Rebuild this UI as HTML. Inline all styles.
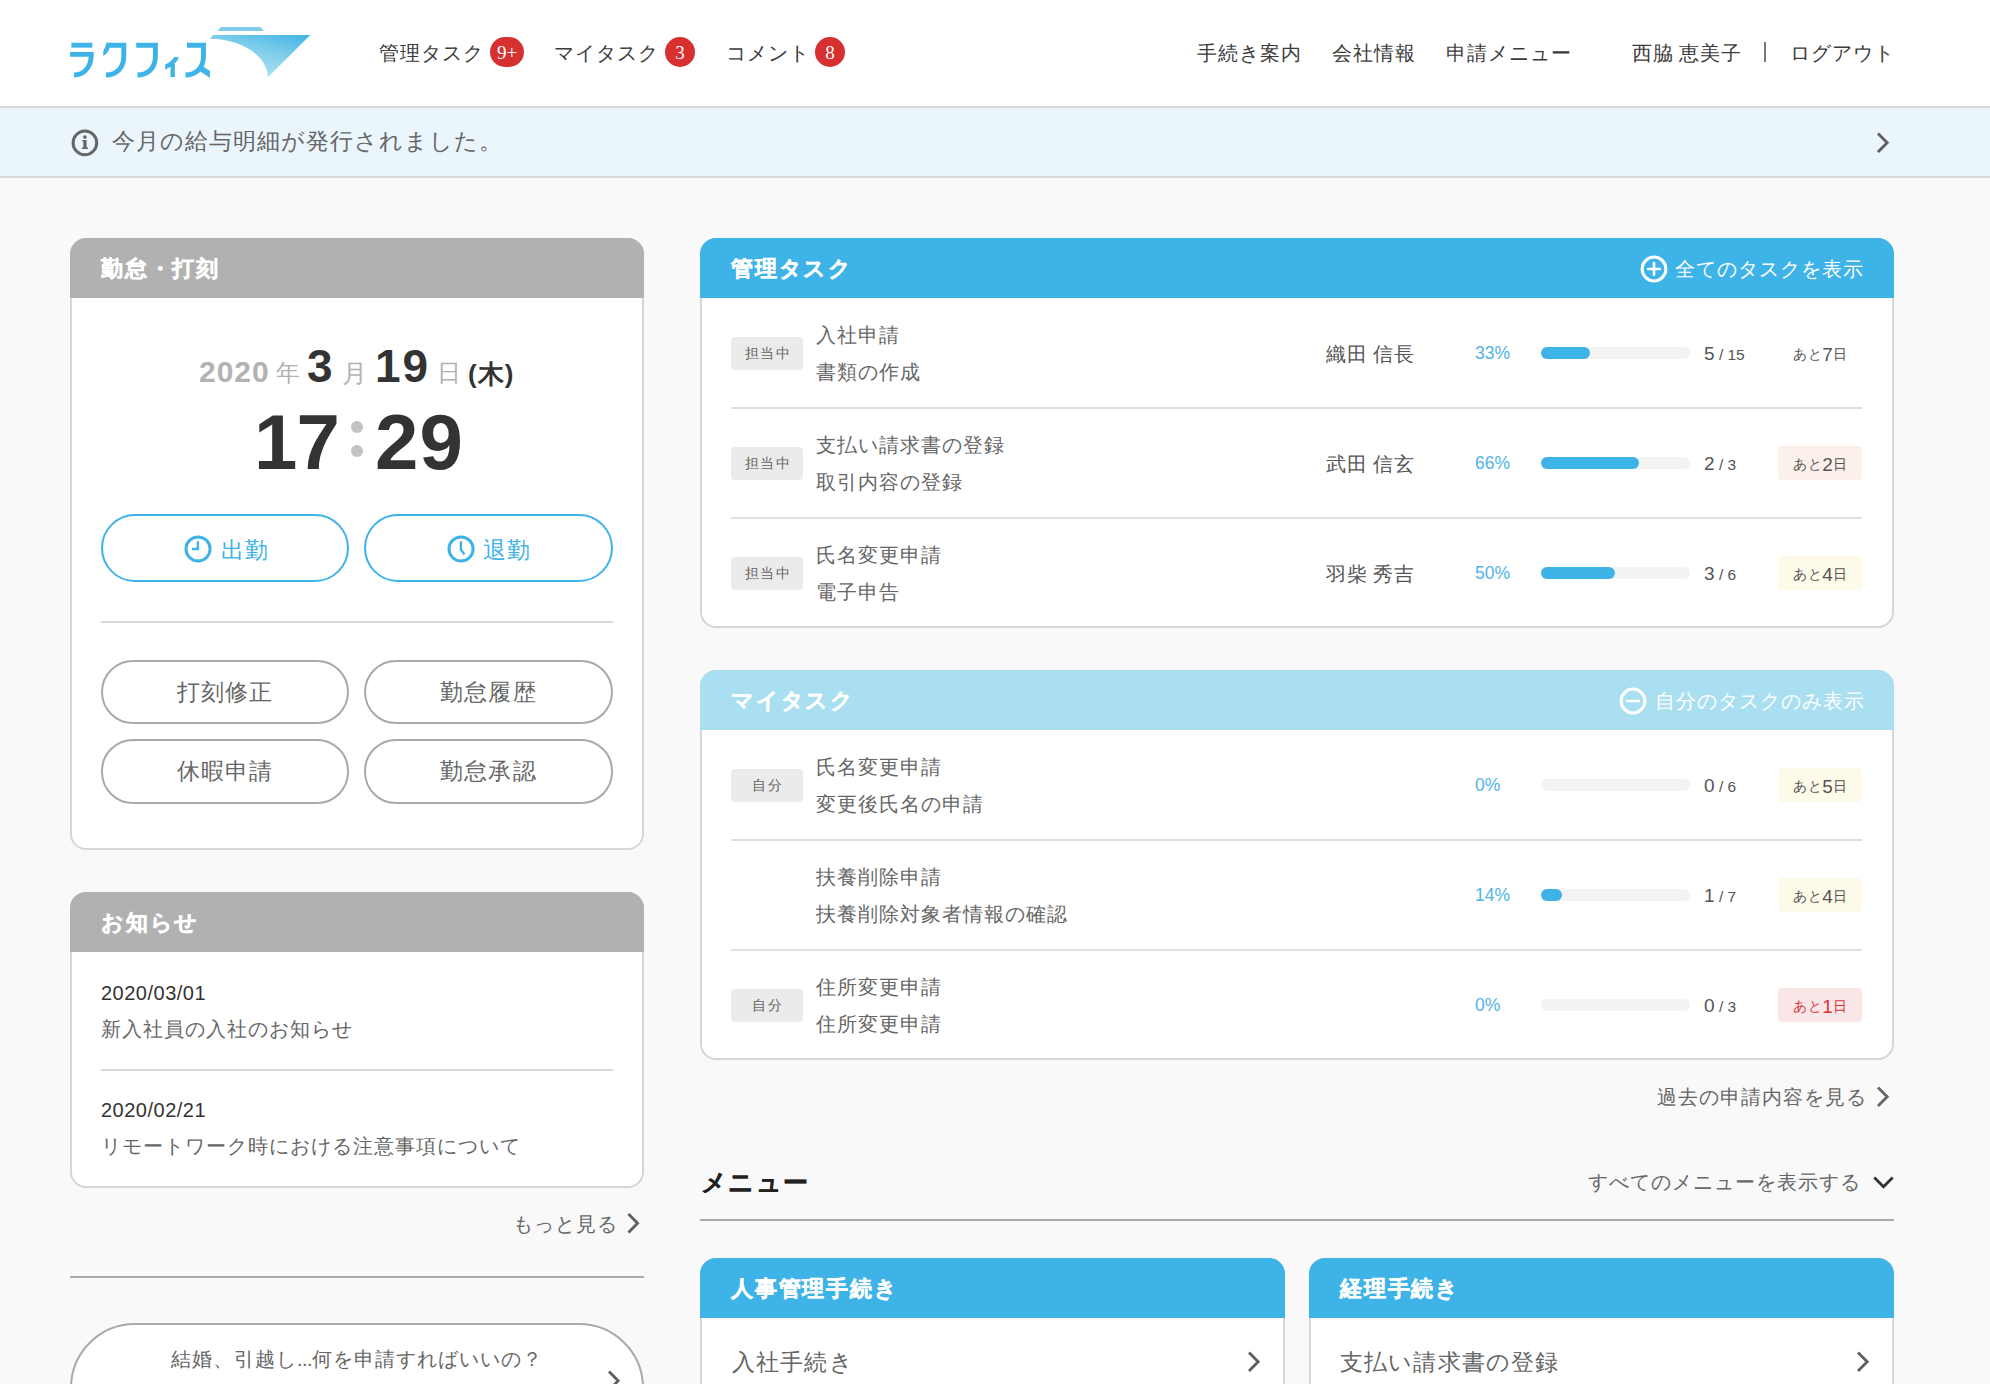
<!DOCTYPE html>
<html lang="ja"><head>
<meta charset="utf-8">
<title>ラクフィス</title>
<style>
*{box-sizing:border-box;margin:0;padding:0}
html,body{width:1990px;height:1384px;overflow:hidden}
body{position:relative;background:#f9f9f9;font-family:"Liberation Sans",sans-serif;color:#5a5a5a;font-size:20px;line-height:1}
.abs{position:absolute;white-space:nowrap}
/* header */
#hdr{position:absolute;left:0;top:0;width:1990px;height:108px;background:#fff;border-bottom:2px solid #d9d9d9}
.nav{position:absolute;top:41px;height:24px;line-height:24px;font-size:20px;letter-spacing:1px;color:#3c3c3c;white-space:nowrap}
.bdg{position:absolute;top:37px;height:30px;border-radius:15px;background:#d63031;color:#fff;font-family:"Liberation Serif",serif;font-size:19px;line-height:32px;text-align:center}
/* notice */
#ntc{position:absolute;left:0;top:108px;width:1990px;height:70px;background:#eaf5fc;border-bottom:2px solid #d9d9d9}
#ntc .t{position:absolute;left:112px;top:21px;height:26px;line-height:26px;font-size:22.5px;letter-spacing:1px;color:#666;white-space:nowrap}
/* cards */
.card{position:absolute;background:#fff;border:2px solid #d6d6d6;border-radius:16px}
.hd{position:absolute;height:60px;-webkit-text-stroke:0.4px #fff;border-radius:16px 16px 0 0;color:#fff;font-weight:bold;font-size:22px;letter-spacing:1.8px;line-height:62px;padding-left:31px;white-space:nowrap}
.hd.gray{background:#b1b1b1}
.hd.blue{background:#3eb3e7}
.hd.lblue{background:#a9dff0}
.hd .r{position:absolute;right:30px;top:0;font-weight:normal;font-size:20px;letter-spacing:1.4px}

.tx{position:absolute;white-space:nowrap;height:30px;line-height:30px}
.f20{font-size:20px;letter-spacing:1px}
.f23{font-size:23px;letter-spacing:1.15px}
.b{font-weight:bold}
.pbtn{position:absolute;height:68px;border:2px solid #3eb3e7;border-radius:34px;background:#fff}
.gbtn{position:absolute;width:248px;height:64px;border:2px solid #a9a9a9;border-radius:32px;background:#fff;font-size:23px;letter-spacing:1.15px;line-height:60px;text-align:center;color:#666;white-space:nowrap}
.hl{position:absolute;height:2px;background:#d9d9d9}

.tag{position:absolute;left:731px;width:72px;height:33px;border-radius:4px;background:#ebebeb;color:#666;font-size:14px;letter-spacing:1.5px;padding-left:1.5px;line-height:33px;text-align:center;white-space:nowrap}
.pct{position:absolute;left:1475px;height:30px;line-height:30px;font-size:17.5px;color:#4fb4e6;white-space:nowrap}
.trk{position:absolute;left:1541px;width:149px;height:12px;border-radius:6px;background:#f3f3f3}
.trk i{display:block;height:12px;border-radius:6px;background:#3eb3e7}
.cnt{position:absolute;left:1704px;height:30px;line-height:30px;font-size:15.5px;color:#555;white-space:nowrap}
.cnt b{font-weight:normal;font-size:19px}
.due{position:absolute;left:1778px;width:84px;height:34px;border-radius:4px;color:#555;font-size:14px;letter-spacing:0.7px;line-height:33px;text-align:center;white-space:nowrap}
.due b{font-weight:normal;font-size:19px;letter-spacing:-0.3px;position:relative;top:1.5px}
.rowl{position:absolute;left:731px;width:1131px;height:2px;background:#e0e0e0}
.ic{position:absolute}
.mi{position:absolute;height:30px;line-height:30px;font-size:23px;letter-spacing:1.15px;color:#666;white-space:nowrap}
.j{display:inline-block;white-space:nowrap;text-align-last:justify}
</style>
</head>
<body>
<div id="hdr">
<svg class="abs" style="left:60px;top:20px" width="260" height="66" viewBox="60 20 260 66">
<defs><linearGradient id="wg" gradientUnits="userSpaceOnUse" x1="310" y1="35" x2="298.1" y2="84.3"><stop offset="0" stop-color="#40b3e7"></stop><stop offset="0.45" stop-color="#78cbe9"></stop><stop offset="1" stop-color="#abe1f1"></stop></linearGradient></defs>
<g fill="none" stroke="#3eb3e7" stroke-width="4.9" stroke-linejoin="miter">
<path d="M71.4 45.2H92.3"></path>
<path d="M70.1 54.4H91.3C91.3 66.5 84.5 75 73.9 75"></path>
<path d="M106.4 45.2H123.8V56C123.8 68 116.5 75 105.9 75"></path>
<path d="M136.2 45.2H155.4V56C155.4 68 148 75 137.5 75"></path>
<path d="M172.7 64V77" stroke-width="4.3"></path>
<path d="M187 45.2H203.5V56C203.5 68 196 75 185.5 75"></path>
</g>
<g fill="#3eb3e7"><path d="M106.4 42.7H111L109.8 47.6Q108.6 53 103.3 56V50.9Q105.6 47.5 106.4 42.7Z"></path><path d="M174.4 56.8L179 57.4Q176 64.2 165.2 69.7V64.6Q171.6 61.6 174.4 56.8Z"></path><path d="M203.2 66.6L209.9 71.1V77.6H209.4L200 71.2Z"></path></g>
<path d="M220.8 27.1H260.3L263.9 31H217.5Z" fill="#80cdea"></path>
<path d="M213 35H310.3L267.9 77.3C267.4 58 245 39.2 210 38.8Z" fill="url(#wg)"></path>
</svg>
<div class="nav" style="left:379px"><span class="j" style="width: 105px;">管理タスク</span></div><div class="bdg" style="left:490px;width:34px">9+</div>
<div class="nav" style="left:554px"><span class="j" style="width: 105px;">マイタスク</span></div><div class="bdg" style="left:665px;width:30px">3</div>
<div class="nav" style="left:726px"><span class="j" style="width: 84px;">コメント</span></div><div class="bdg" style="left:815px;width:30px">8</div>
<div class="nav" style="left:1197px"><span class="j" style="width: 105px;">手続き案内</span></div>
<div class="nav" style="left:1332px"><span class="j" style="width: 84px;">会社情報</span></div>
<div class="nav" style="left:1446px"><span class="j" style="width: 126px;">申請メニュー</span></div>
<div class="nav" style="left:1632px;word-spacing:-1.5px"><span class="j" style="width: 110.06px;">西脇 恵美子</span></div>
<div class="abs" style="left:1764px;top:42px;width:2px;height:20px;background:#777"></div>
<div class="nav" style="left:1790px"><span class="j" style="width: 105px;">ログアウト</span></div>
</div>
<div id="ntc">
<svg class="abs" style="left:70px;top:20px" width="30" height="30" viewBox="0 0 30 30"><circle cx="14.9" cy="14.9" r="11.8" fill="none" stroke="#666" stroke-width="3"></circle><circle cx="14.9" cy="9.1" r="1.8" fill="#666"></circle><path d="M12.3 12.1H16.6V19.5H18V21H11.9V19.5H13.3V13.6H12.3Z" fill="#666"></path></svg>
<div class="t"><span class="j" style="width: 391px;">今月の給与明細が発行されました。</span></div>
<svg class="abs" style="left:1872px;top:22px" width="22" height="26" viewBox="0 0 22 26"><path d="M6 3.5L15.2 12.8L6 22" fill="none" stroke="#5e5e5e" stroke-width="2.8"></path></svg>
</div>

<!-- attendance card -->
<div class="card" style="left:70px;top:238px;width:574px;height:612px"></div>
<div class="hd gray" style="left:70px;top:238px;width:574px"><span class="j" style="width: 119px;">勤怠・打刻</span></div>
<div class="tx b" style="left:199px;top:357px;font-size:30px;color:#b2b2b2;letter-spacing:1px">2020</div>
<div class="tx" style="left:276px;top:358px;font-size:24px;color:#b2b2b2"><span class="j" style="width: 24px;">年</span></div>
<div class="tx b" style="left:307px;top:351px;font-size:46px;color:#333">3</div>
<div class="tx" style="left:342px;top:358px;font-size:25px;color:#b2b2b2"><span class="j" style="width: 25px;">月</span></div>
<div class="tx b" style="left:375px;top:351px;font-size:46px;color:#333;letter-spacing:2px">19</div>
<div class="tx" style="left:437px;top:358px;font-size:24px;color:#b2b2b2"><span class="j" style="width: 24px;">日</span></div>
<div class="tx b" style="left:468px;top:359px;font-size:26px;letter-spacing:1px;color:#333"><span class="j" style="width: 46.33px;">(木)</span></div>
<div class="tx b" style="left:254px;top:412px;height:60px;line-height:60px;font-size:78px;color:#333;letter-spacing:-1px">17</div>
<div class="abs" style="left:351px;top:421px;width:12px;height:12px;border-radius:6px;background:#c2c2c2"></div>
<div class="abs" style="left:351px;top:445px;width:12px;height:12px;border-radius:6px;background:#c2c2c2"></div>
<div class="tx b" style="left:375px;top:412px;height:60px;line-height:60px;font-size:78px;color:#333;letter-spacing:1px">29</div>
<div class="pbtn" style="left:101px;top:514px;width:248px"></div>
<div class="pbtn" style="left:364px;top:514px;width:249px"></div>
<svg class="abs" style="left:183px;top:534px" width="30" height="30" viewBox="183 534 30 30"><circle cx="198.05" cy="548.95" r="12.05" fill="none" stroke="#3eb3e7" stroke-width="3"></circle><path d="M197.9 541.2V549H192" fill="none" stroke="#3eb3e7" stroke-width="2.4"></path></svg>
<div class="tx f23" style="left:221px;top:535px;color:#3eb3e7"><span class="j" style="width: 48.31px;">出勤</span></div>
<svg class="abs" style="left:446px;top:534px" width="30" height="30" viewBox="446 534 30 30"><circle cx="461.05" cy="548.95" r="12.05" fill="none" stroke="#3eb3e7" stroke-width="3"></circle><path d="M460.9 541.2V549.6L464.4 554.4" fill="none" stroke="#3eb3e7" stroke-width="2.4"></path></svg>
<div class="tx f23" style="left:483px;top:535px;color:#3eb3e7"><span class="j" style="width: 48.31px;">退勤</span></div>
<div class="hl" style="left:101px;top:621px;width:512px"></div>
<div class="gbtn" style="left:101px;top:660px"><span class="j" style="width: 96.61px;">打刻修正</span></div>
<div class="gbtn" style="left:364px;top:660px;width:249px"><span class="j" style="width: 96.61px;">勤怠履歴</span></div>
<div class="gbtn" style="left:101px;top:739px;height:65px;line-height:61px"><span class="j" style="width: 96.61px;">休暇申請</span></div>
<div class="gbtn" style="left:364px;top:739px;height:65px;line-height:61px;width:249px"><span class="j" style="width: 96.61px;">勤怠承認</span></div>
<!-- news card -->
<div class="card" style="left:70px;top:892px;width:574px;height:296px"></div>
<div class="hd gray" style="left:70px;top:892px;width:574px"><span class="j" style="width: 98.2px;">お知らせ</span></div>
<div class="tx" style="left:101px;top:978px;font-size:20px;letter-spacing:0.5px;color:#333">2020/03/01</div>
<div class="tx f20" style="left:101px;top:1014px;color:#666"><span class="j" style="width: 252px;">新入社員の入社のお知らせ</span></div>
<div class="hl" style="left:101px;top:1069px;width:512px"></div>
<div class="tx" style="left:101px;top:1095px;font-size:20px;letter-spacing:0.5px;color:#333">2020/02/21</div>
<div class="tx f20" style="left:101px;top:1131px;color:#666"><span class="j" style="width: 420px;">リモートワーク時における注意事項について</span></div>
<div class="tx f20" style="left:513px;top:1209px;color:#666"><span class="j" style="width: 105px;">もっと見る</span></div>
<svg class="abs" style="left:622px;top:1210px" width="22" height="26" viewBox="0 0 22 26"><path d="M6.5 4L15.6 13.2L6.5 22.5" fill="none" stroke="#5e5e5e" stroke-width="2.8"></path></svg>
<div class="hl" style="left:70px;top:1276px;width:574px;background:#ababab"></div>
<div class="abs" style="left:70px;top:1323px;width:574px;height:130px;border:2px solid #a9a9a9;border-radius:65px;background:#fff"></div>
<div class="tx f20" style="left:171px;top:1344px;color:#666"><span class="j" style="width: 372.17px;">結婚、引越し<span style="letter-spacing:-0.5px">...</span>何を申請すればいいの？</span></div>
<svg class="abs" style="left:603px;top:1367.5px" width="22" height="26" viewBox="0 0 22 26"><path d="M6 3.5L15.2 12.8L6 22" fill="none" stroke="#5e5e5e" stroke-width="2.8"></path></svg>

<!-- managed tasks -->
<div class="card" style="left:700px;top:238px;width:1194px;height:390px"></div>
<div class="hd blue" style="left:700px;top:238px;width:1194px"><span class="j" style="width: 122px;">管理タスク</span></div>
<svg class="ic" style="left:1639px;top:254px" width="30" height="30" viewBox="0 0 30 30"><circle cx="15" cy="15" r="11.9" fill="none" stroke="#fff" stroke-width="3"></circle><path d="M9.2 15H20.8M15 9.2V20.8" fill="none" stroke="#fff" stroke-width="2.7" stroke-linecap="round"></path></svg>
<div class="tx f20" style="left:1675px;top:254px;color:#fff"><span class="j" style="width: 189px;">全てのタスクを表示</span></div>
<div class="tag" style="top:337px"><span class="j" style="width: 46.5px;">担当中</span></div>
<div class="tx f20" style="left:816px;top:320px;color:#666"><span class="j" style="width: 84px;">入社申請</span></div>
<div class="tx f20" style="left:816px;top:357px;color:#666"><span class="j" style="width: 105px;">書類の作成</span></div>
<div class="tx f20" style="left:1326px;word-spacing:-1.5px;top:339px;color:#555"><span class="j" style="width: 89.06px;">織田 信長</span></div>
<div class="pct" style="top:338px">33%</div>
<div class="trk" style="top:347px"><i style="width:49px"></i></div>
<div class="cnt" style="top:339px"><b>5</b> / 15</div>
<div class="due" style="top:336px;color:#555"><span class="j" style="width: 54.39px;">あと<b>7</b>日</span></div>
<div class="rowl" style="top:407px"></div>
<div class="tag" style="top:447px"><span class="j" style="width: 46.5px;">担当中</span></div>
<div class="tx f20" style="left:816px;top:430px;color:#666"><span class="j" style="width: 189px;">支払い請求書の登録</span></div>
<div class="tx f20" style="left:816px;top:467px;color:#666"><span class="j" style="width: 147px;">取引内容の登録</span></div>
<div class="tx f20" style="left:1326px;word-spacing:-1.5px;top:449px;color:#555"><span class="j" style="width: 89.06px;">武田 信玄</span></div>
<div class="pct" style="top:448px">66%</div>
<div class="trk" style="top:457px"><i style="width:98px"></i></div>
<div class="cnt" style="top:449px"><b>2</b> / 3</div>
<div class="due" style="top:446px;background:#fbf0ea;color:#555"><span class="j" style="width: 54.39px;">あと<b>2</b>日</span></div>
<div class="rowl" style="top:517px"></div>
<div class="tag" style="top:557px"><span class="j" style="width: 46.5px;">担当中</span></div>
<div class="tx f20" style="left:816px;top:540px;color:#666"><span class="j" style="width: 126px;">氏名変更申請</span></div>
<div class="tx f20" style="left:816px;top:577px;color:#666"><span class="j" style="width: 84px;">電子申告</span></div>
<div class="tx f20" style="left:1326px;word-spacing:-1.5px;top:559px;color:#555"><span class="j" style="width: 89.06px;">羽柴 秀吉</span></div>
<div class="pct" style="top:558px">50%</div>
<div class="trk" style="top:567px"><i style="width:74px"></i></div>
<div class="cnt" style="top:559px"><b>3</b> / 6</div>
<div class="due" style="top:556px;background:#fefaea;color:#555"><span class="j" style="width: 54.39px;">あと<b>4</b>日</span></div>
<!-- my tasks -->
<div class="card" style="left:700px;top:670px;width:1194px;height:390px"></div>
<div class="hd lblue" style="left:700px;top:670px;width:1194px"><span class="j" style="width: 124px;">マイタスク</span></div>
<svg class="ic" style="left:1618px;top:686px" width="30" height="30" viewBox="0 0 30 30"><circle cx="15" cy="15" r="11.9" fill="none" stroke="#fff" stroke-width="3"></circle><path d="M9.2 15H20.8" fill="none" stroke="#fff" stroke-width="2.7" stroke-linecap="round"></path></svg>
<div class="tx f20" style="left:1655px;top:686px;color:#fff"><span class="j" style="width: 210px;">自分のタスクのみ表示</span></div>
<div class="tag" style="top:769px"><span class="j" style="width: 31px;">自分</span></div>
<div class="tx f20" style="left:816px;top:752px;color:#666"><span class="j" style="width: 126px;">氏名変更申請</span></div>
<div class="tx f20" style="left:816px;top:789px;color:#666"><span class="j" style="width: 168px;">変更後氏名の申請</span></div>
<div class="pct" style="top:770px">0%</div>
<div class="trk" style="top:779px"></div>
<div class="cnt" style="top:771px"><b>0</b> / 6</div>
<div class="due" style="top:768px;background:#fefaea;color:#555"><span class="j" style="width: 54.39px;">あと<b>5</b>日</span></div>
<div class="rowl" style="top:839px"></div>
<div class="tx f20" style="left:816px;top:862px;color:#666"><span class="j" style="width: 126px;">扶養削除申請</span></div>
<div class="tx f20" style="left:816px;top:899px;color:#666"><span class="j" style="width: 252px;">扶養削除対象者情報の確認</span></div>
<div class="pct" style="top:880px">14%</div>
<div class="trk" style="top:889px"><i style="width:21px"></i></div>
<div class="cnt" style="top:881px"><b>1</b> / 7</div>
<div class="due" style="top:878px;background:#fefaea;color:#555"><span class="j" style="width: 54.39px;">あと<b>4</b>日</span></div>
<div class="rowl" style="top:949px"></div>
<div class="tag" style="top:989px"><span class="j" style="width: 31px;">自分</span></div>
<div class="tx f20" style="left:816px;top:972px;color:#666"><span class="j" style="width: 126px;">住所変更申請</span></div>
<div class="tx f20" style="left:816px;top:1009px;color:#666"><span class="j" style="width: 126px;">住所変更申請</span></div>
<div class="pct" style="top:990px">0%</div>
<div class="trk" style="top:999px"></div>
<div class="cnt" style="top:991px"><b>0</b> / 3</div>
<div class="due" style="top:988px;background:#f9e7e8;color:#d9363a"><span class="j" style="width: 54.39px;">あと<b>1</b>日</span></div>
<div class="tx f20" style="left:1657px;top:1082px;color:#666"><span class="j" style="width: 210px;">過去の申請内容を見る</span></div>
<svg class="ic" style="left:1872px;top:1084px" width="22" height="26" viewBox="0 0 22 26"><path d="M6 3.5L15.2 12.8L6 22" fill="none" stroke="#666" stroke-width="2.8"></path></svg>
<!-- menu -->
<div class="tx b" style="left:701px;top:1167px;font-size:25px;letter-spacing:1.25px;color:#222;-webkit-text-stroke:0.3px #222"><span class="j" style="width: 108px;">メニュー</span></div>
<div class="tx f20" style="left:1588px;top:1167px;color:#666"><span class="j" style="width: 273px;">すべてのメニューを表示する</span></div>
<svg class="ic" style="left:1870px;top:1170px" width="28" height="24" viewBox="0 0 28 24"><path d="M4.3 7.6L13.5 16.8L22.7 7.6" fill="none" stroke="#333" stroke-width="2.8"></path></svg>
<div class="hl" style="left:700px;top:1219px;width:1194px;background:#ababab"></div>
<div class="card" style="left:700px;top:1258px;width:585px;height:200px;border-radius:16px 16px 0 0"></div>
<div class="hd blue" style="left:700px;top:1258px;width:585px"><span class="j" style="width: 167.61px;">人事管理手続き</span></div>
<div class="mi" style="left:732px;top:1347px"><span class="j" style="width: 121.75px;">入社手続き</span></div>
<svg class="ic" style="left:1243px;top:1349px" width="22" height="26" viewBox="0 0 22 26"><path d="M6 3.5L15.2 12.8L6 22" fill="none" stroke="#5e5e5e" stroke-width="2.8"></path></svg>
<div class="card" style="left:1309px;top:1258px;width:585px;height:200px;border-radius:16px 16px 0 0"></div>
<div class="hd blue" style="left:1309px;top:1258px;width:585px"><span class="j" style="width: 120px;">経理手続き</span></div>
<div class="mi" style="left:1340px;top:1347px"><span class="j" style="width: 219.36px;">支払い請求書の登録</span></div>
<svg class="ic" style="left:1852px;top:1349px" width="22" height="26" viewBox="0 0 22 26"><path d="M6 3.5L15.2 12.8L6 22" fill="none" stroke="#5e5e5e" stroke-width="2.8"></path></svg>


</body></html>
